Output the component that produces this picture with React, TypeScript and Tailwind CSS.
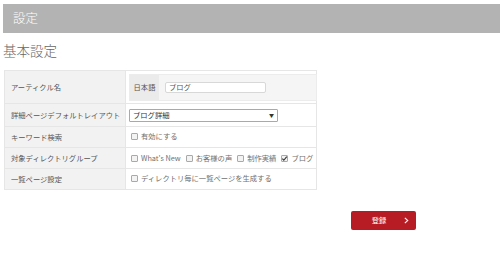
import React from "react";

const jp = { fontFamily: '"Noto Sans CJK JP", "Noto Sans", sans-serif' };

function Box({ checked }: { checked?: boolean }) {
  return (
    <span className="relative inline-flex items-center justify-center w-[7px] h-[7px] border border-[#a9a9a9] rounded-[1px] bg-[#f3f3f3] shrink-0">
      {checked && (
        <svg viewBox="0 0 8 8" className="absolute w-[7px] h-[7px]">
          <path d="M1.5 4.2 L3.2 6 L6.6 1.8" fill="none" stroke="#333" strokeWidth="1.3" />
        </svg>
      )}
    </span>
  );
}

function Check({ label, checked }: { label: string; checked?: boolean }) {
  return (
    <span className="inline-flex items-center gap-[3px] whitespace-nowrap">
      <Box checked={checked} />
      <span>{label}</span>
    </span>
  );
}

function Row({
  label,
  h,
  children,
}: {
  label: string;
  h: string;
  children: React.ReactNode;
}) {
  return (
    <div className={`flex border-b border-[#e6e6e6] ${h}`}>
      <div className="w-[121px] shrink-0 bg-[#f2f2f2] border-r border-[#e6e6e6] flex items-center pl-[6px] text-[#555] whitespace-nowrap">
        {label}
      </div>
      <div className="flex-1 flex items-center pl-[3px] text-[#707070] whitespace-nowrap">{children}</div>
    </div>
  );
}

export default function App() {
  return (
    <div className="w-[500px] h-[257px] bg-white relative" style={jp}>
      <div className="pt-[4px] pl-[3px]">
        <div className="h-[29px] bg-[#b3b3b3] flex items-center pl-[10px] text-white text-[12.5px] font-light">
          設定
        </div>
      </div>
      <div className="pl-[3px] pt-[7px] text-[13.5px] leading-[20px] text-[#666] font-light">基本設定</div>
      <div className="ml-[4px] mt-[10px] w-[313px] border border-[#e6e6e6] border-b-0 text-[7.3px]">
        <Row label="アーティクル名" h="h-[33px]">
          <div className="flex w-[188px] h-[27px] bg-[#f5f5f5] border border-[#ececec]">
            <div className="w-[29px] bg-[#ebebeb] flex items-center justify-center text-[#555]">
              日本語
            </div>
            <div className="flex items-center pl-[6px]">
              <div className="w-[101px] h-[11px] bg-white border border-[#d8d8d8] rounded-[2px] flex items-center pl-[3px] text-[#555]">
                ブログ
              </div>
            </div>
          </div>
        </Row>
        <Row label="詳細ページデフォルトレイアウト" h="h-[23px]">
          <div className="w-[149px] h-[13px] border border-[#a9a9a9] rounded-[1px] bg-white flex items-center justify-between pl-[3px] pr-[3px] text-[#333]">
            <span>ブログ詳細</span>
            <span className="text-[5px]">▼</span>
          </div>
        </Row>
        <Row label="キーワード検索" h="h-[21px]">
          <span className="pl-[2px]">
            <Check label="有効にする" />
          </span>
        </Row>
        <Row label="対象ディレクトリグループ" h="h-[21px]">
          <span className="pl-[2px] flex items-center gap-[5px]">
            <Check label="What's New" />
            <Check label="お客様の声" />
            <Check label="制作実績" />
            <Check label="ブログ" checked />
          </span>
        </Row>
        <Row label="一覧ページ設定" h="h-[21px]">
          <span className="pl-[2px]">
            <Check label="ディレクトリ毎に一覧ページを生成する" />
          </span>
        </Row>
      </div>
      <div className="flex pl-[351px] mt-[21px]">
        <button className="w-[65px] h-[19px] bg-[#b71c24] rounded-[2px] flex items-center text-white text-[7.3px]">
          <span className="flex-1 text-center pl-[3px]">登録</span>
          <svg viewBox="0 0 6 8" className="w-[5px] h-[7px] mr-[7px]">
            <path d="M1 0.8 L4.5 4 L1 7.2" fill="none" stroke="white" strokeWidth="1.3" />
          </svg>
        </button>
      </div>
    </div>
  );
}
